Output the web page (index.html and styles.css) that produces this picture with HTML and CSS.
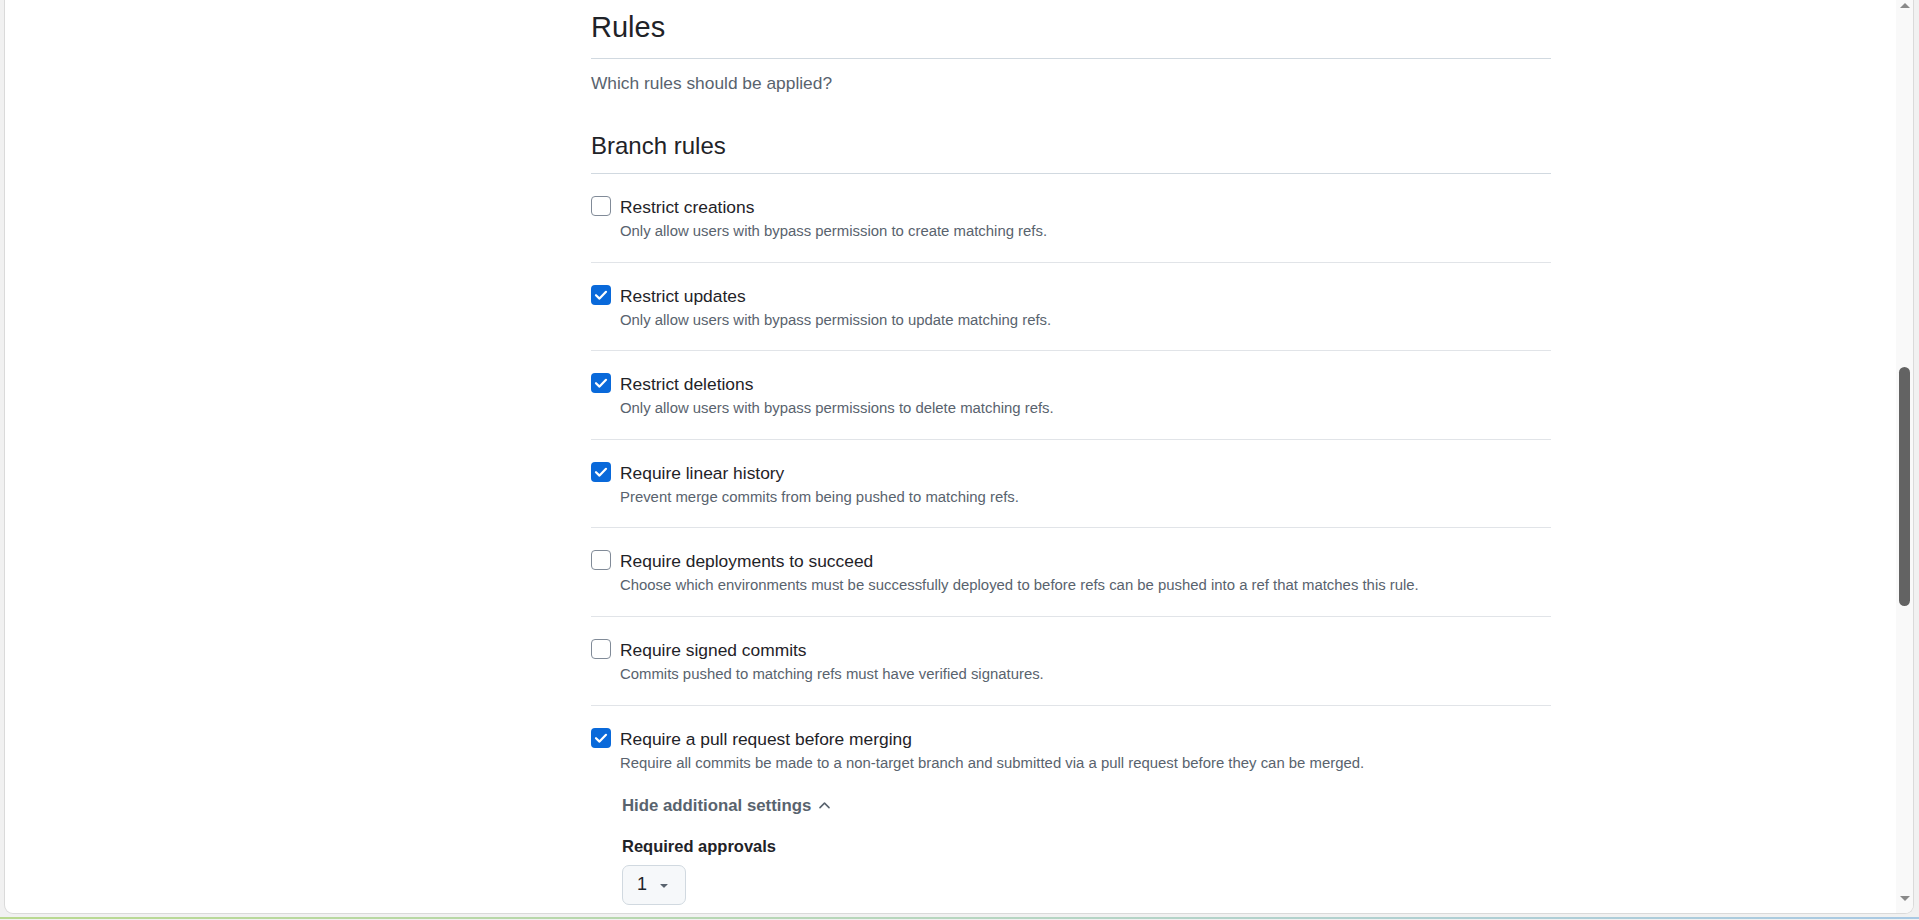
FILE: index.html
```html
<!DOCTYPE html>
<html lang="en">
<head>
<meta charset="utf-8">
<title>Rules</title>
<link rel="stylesheet" href="styles.css">
</head>
<body>
<div class="window">
  <main class="main">
    <div class="content">
      <h2 class="page-title">Rules</h2>
      <p class="lead">Which rules should be applied?</p>
      <h3 class="section-title">Branch rules</h3>

      <ul class="rules">
        <li class="rule">
          <span class="box"></span>
          <div class="rule-text">
            <div class="rule-title">Restrict creations</div>
            <div class="rule-desc">Only allow users with bypass permission to create matching refs.</div>
          </div>
        </li>
        <li class="rule">
          <span class="box checked"><svg viewBox="0 0 20 20" width="20" height="20"><polyline points="5,10.2 8.5,13.6 15,6.8" fill="none" stroke="#fff" stroke-width="2.2" stroke-linecap="round" stroke-linejoin="round"/></svg></span>
          <div class="rule-text">
            <div class="rule-title">Restrict updates</div>
            <div class="rule-desc">Only allow users with bypass permission to update matching refs.</div>
          </div>
        </li>
        <li class="rule">
          <span class="box checked"><svg viewBox="0 0 20 20" width="20" height="20"><polyline points="5,10.2 8.5,13.6 15,6.8" fill="none" stroke="#fff" stroke-width="2.2" stroke-linecap="round" stroke-linejoin="round"/></svg></span>
          <div class="rule-text">
            <div class="rule-title">Restrict deletions</div>
            <div class="rule-desc">Only allow users with bypass permissions to delete matching refs.</div>
          </div>
        </li>
        <li class="rule">
          <span class="box checked"><svg viewBox="0 0 20 20" width="20" height="20"><polyline points="5,10.2 8.5,13.6 15,6.8" fill="none" stroke="#fff" stroke-width="2.2" stroke-linecap="round" stroke-linejoin="round"/></svg></span>
          <div class="rule-text">
            <div class="rule-title">Require linear history</div>
            <div class="rule-desc">Prevent merge commits from being pushed to matching refs.</div>
          </div>
        </li>
        <li class="rule">
          <span class="box"></span>
          <div class="rule-text">
            <div class="rule-title">Require deployments to succeed</div>
            <div class="rule-desc">Choose which environments must be successfully deployed to before refs can be pushed into a ref that matches this rule.</div>
          </div>
        </li>
        <li class="rule">
          <span class="box"></span>
          <div class="rule-text">
            <div class="rule-title">Require signed commits</div>
            <div class="rule-desc">Commits pushed to matching refs must have verified signatures.</div>
          </div>
        </li>
        <li class="rule last">
          <span class="box checked"><svg viewBox="0 0 20 20" width="20" height="20"><polyline points="5,10.2 8.5,13.6 15,6.8" fill="none" stroke="#fff" stroke-width="2.2" stroke-linecap="round" stroke-linejoin="round"/></svg></span>
          <div class="rule-text">
            <div class="rule-title">Require a pull request before merging</div>
            <div class="rule-desc">Require all commits be made to a non-target branch and submitted via a pull request before they can be merged.</div>
            <div class="extra">
              <button class="toggle" type="button">Hide additional settings
                <svg class="chev" viewBox="0 0 16 16" width="16" height="16"><path fill="currentColor" d="M3.22 10.53a.749.749 0 0 1 0-1.06l4.25-4.25a.749.749 0 0 1 1.06 0l4.25 4.25a.749.749 0 0 1-1.042 1.08L8 6.811 4.28 10.53a.749.749 0 0 1-1.06 0Z"/></svg>
              </button>
              <div class="field-label">Required approvals</div>
              <button class="select" type="button"><span>1</span>
                <svg viewBox="0 0 16 16" width="16" height="16"><path fill="#59636e" d="m4.427 7.427 3.396 3.396a.25.25 0 0 0 .354 0l3.396-3.396A.25.25 0 0 0 11.396 7H4.604a.25.25 0 0 0-.177.427Z"/></svg>
              </button>
            </div>
          </div>
        </li>
      </ul>
    </div>
  </main>
  <div class="scrollbar">
    <span class="arrow up"></span>
    <span class="thumb"></span>
    <span class="arrow down"></span>
  </div>
</div>
<div class="taskbar-line"></div>
</body>
</html>
```

FILE: styles.css
```css
html, body {
  margin: 0;
  padding: 0;
}
body {
  width: 1919px;
  height: 920px;
  overflow: hidden;
  background: #f1f1f1;
  font-family: "Liberation Sans", Arial, sans-serif;
  color: #1f2328;
}
.window {
  margin-left: 4px;
  width: 1910px;
  height: 914px;
  box-sizing: border-box;
  border: 1px solid #dadada;
  border-top: none;
  border-radius: 0 0 9px 9px;
  background: #fff;
  display: flex;
  overflow: hidden;
}
.main {
  flex: 1;
  padding-left: 586px;
  overflow: hidden;
}
.content {
  width: 960px;
}
.page-title {
  margin: 7px 0 0;
  font-size: 29px;
  font-weight: 400;
  line-height: 40px;
  padding-bottom: 11px;
  border-bottom: 1px solid #d1d9e0;
}
.lead {
  margin: 12px 0 0;
  font-size: 17.35px;
  line-height: 25px;
  color: #59636e;
}
.section-title {
  margin: 33px 0 0;
  font-size: 24px;
  font-weight: 400;
  line-height: 34px;
  padding-bottom: 10px;
  border-bottom: 1px solid #d1d9e0;
}
.rules {
  list-style: none;
  margin: 0;
  padding: 0;
}
.rule {
  display: flex;
  align-items: flex-start;
  gap: 9px;
  padding: 21px 0 19.6px;
  border-bottom: 1px solid #e1e4e8;
}
.rule.last {
  border-bottom: none;
}
.box {
  flex: none;
  width: 20px;
  height: 20px;
  margin-top: 1px;
  box-sizing: border-box;
  border: 1px solid #818b98;
  border-radius: 4px;
  background: #fff;
  display: flex;
}
.box.checked {
  border: none;
  background: #0969da;
}
.rule-text {
  display: flex;
  flex-direction: column;
  align-items: flex-start;
}
.rule-title {
  font-size: 17.4px;
  line-height: 25px;
  color: #1f2328;
}
.rule-desc {
  font-size: 14.9px;
  line-height: 22px;
  color: #59636e;
}
.extra {
  padding-left: 2px;
  display: flex;
  flex-direction: column;
  align-items: flex-start;
}
.toggle {
  margin-top: 19px;
  padding: 0;
  border: none;
  background: none;
  font-family: inherit;
  font-size: 16.8px;
  font-weight: 700;
  line-height: 25px;
  color: #59636e;
  display: flex;
  align-items: center;
  gap: 5px;
}
.chev {
  width: 17px;
  height: 17px;
}
.field-label {
  margin-top: 16px;
  font-size: 16.5px;
  font-weight: 700;
  line-height: 25px;
  color: #1f2328;
}
.select {
  margin-top: 6px;
  width: 64px;
  height: 40px;
  box-sizing: border-box;
  padding: 0 0 0 14px;
  border: 1px solid #d1d9e0;
  border-radius: 7px;
  background: #f6f8fa;
  font-family: inherit;
  font-size: 18px;
  color: #1f2328;
  display: flex;
  align-items: center;
  gap: 9px;
}
.scrollbar {
  flex: none;
  width: 17px;
  background: #f9f9f9;
  display: flex;
  flex-direction: column;
  align-items: center;
}
.arrow {
  width: 0;
  height: 0;
  border-left: 5px solid transparent;
  border-right: 5px solid transparent;
}
.arrow.up {
  margin-top: 3px;
  border-bottom: 5px solid #8a8a8a;
}
.arrow.down {
  margin-top: auto;
  margin-bottom: 12px;
  border-top: 5px solid #8a8a8a;
}
.thumb {
  margin-top: 359px;
  width: 11px;
  height: 239px;
  border-radius: 6px;
  background: #636363;
}
.taskbar-line {
  margin-top: 3px;
  height: 2px;
  background: linear-gradient(90deg, #b9d98f 0%, #b7d6c0 50%, #a9c9e4 100%);
}
```
